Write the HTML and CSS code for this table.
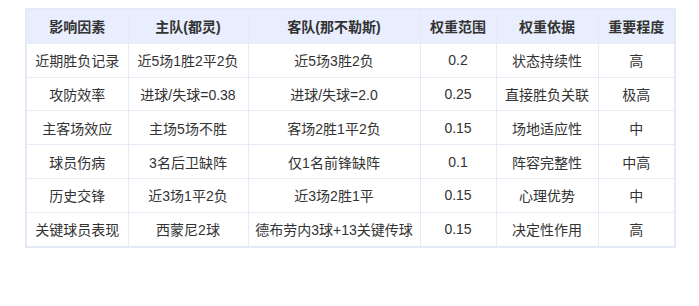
FILE: index.html
```html
<!DOCTYPE html>
<html lang="zh-CN">
<head>
  <meta charset="UTF-8">
  <title>权重分析</title>
  <link rel="stylesheet" href="styles.css">
</head>
<body>

<div class="wrap">
  <table class="weights">
    <colgroup>
      <col class="c1"><col class="c2"><col class="c3"><col class="c4"><col class="c5"><col class="c6">
    </colgroup>
    <thead>
      <tr>
        <th>影响因素</th>
        <th>主队(都灵)</th>
        <th>客队(那不勒斯)</th>
        <th>权重范围</th>
        <th>权重依据</th>
        <th>重要程度</th>
      </tr>
    </thead>
    <tbody>
      <tr><td>近期胜负记录</td><td>近5场1胜2平2负</td><td>近5场3胜2负</td><td>0.2</td><td>状态持续性</td><td>高</td></tr>
      <tr><td>攻防效率</td><td>进球/失球=0.38</td><td>进球/失球=2.0</td><td>0.25</td><td>直接胜负关联</td><td>极高</td></tr>
      <tr><td>主客场效应</td><td>主场5场不胜</td><td>客场2胜1平2负</td><td>0.15</td><td>场地适应性</td><td>中</td></tr>
      <tr><td>球员伤病</td><td>3名后卫缺阵</td><td>仅1名前锋缺阵</td><td>0.1</td><td>阵容完整性</td><td>中高</td></tr>
      <tr><td>历史交锋</td><td>近3场1平2负</td><td>近3场2胜1平</td><td>0.15</td><td>心理优势</td><td>中</td></tr>
      <tr><td>关键球员表现</td><td>西蒙尼2球</td><td>德布劳内3球+13关键传球</td><td>0.15</td><td>决定性作用</td><td>高</td></tr>
    </tbody>
  </table>
</div>

</body>
</html>
```

FILE: styles.css
```css
body {
  margin: 0;
  background: #fff;
  font-family: 'Liberation Sans', 'Noto Sans CJK SC', sans-serif;
  color: #333;
}
.wrap {
  padding: 8px 25px;
}
.weights {
  width: 649px;
  border-collapse: collapse;
  table-layout: fixed;
  border: 2px solid #e4e9f6;
  font-size: 14px;
}
.c1 { width: 102px; }
.c2 { width: 120px; }
.c3 { width: 172px; }
.c4 { width: 76px; }
.c5 { width: 102px; }
.c6 { width: 77px; }

.weights th,
.weights td {
  border: 1px solid #e6eaf4;
  text-align: center;
  height: 32.8px;
  padding: 0 4px;
  white-space: nowrap;
}
.weights th {
  background: #e8eefd;
  font-weight: bold;
  color: #333;
}
```
